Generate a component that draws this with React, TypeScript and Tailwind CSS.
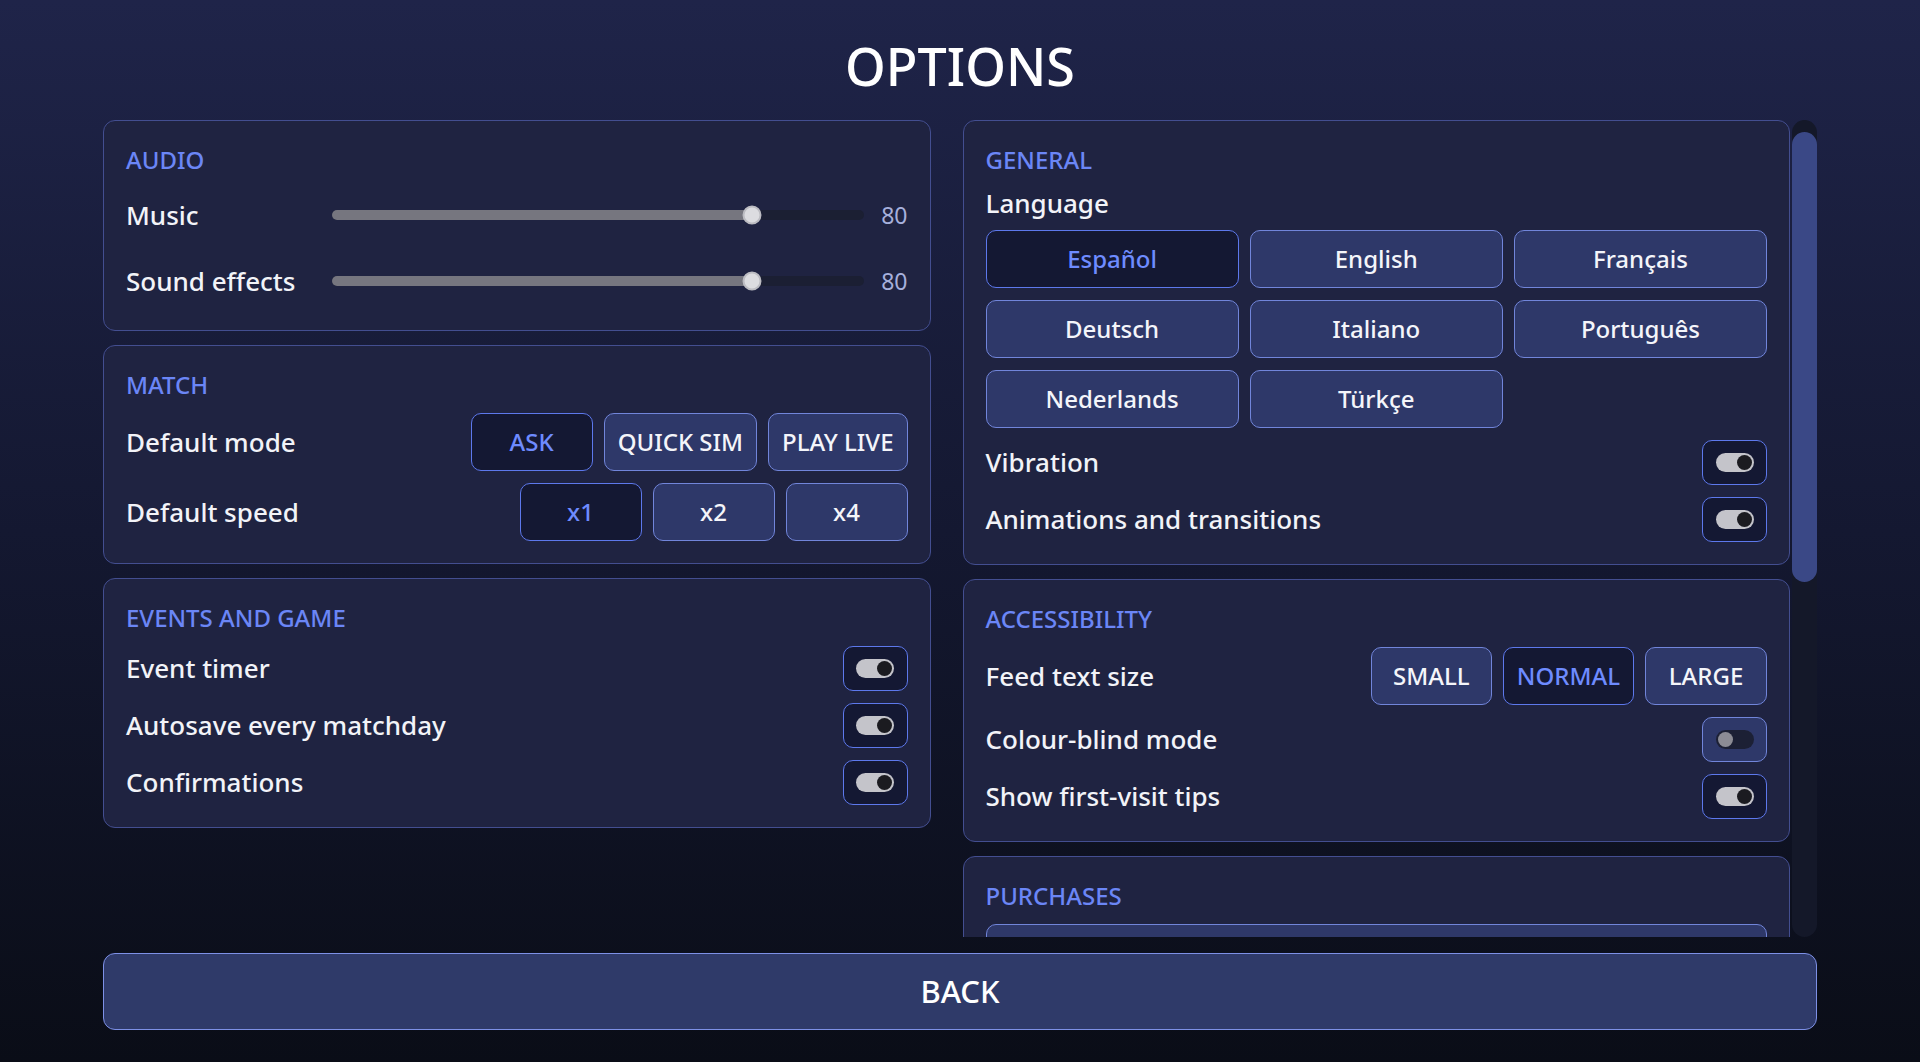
import React from "react";

const FONT = { fontFamily: '"Noto Sans", "Open Sans", sans-serif' };

function Panel({ title, children }: { title: string; children?: React.ReactNode }) {
  return (
    <div className="rounded-[12px] border border-[#434e90] bg-[#1f2341] p-[22px] flex flex-col gap-[12px] shrink-0">
      <div className="text-[24px] leading-[33px] font-medium text-[#6b86f6] uppercase">{title}</div>
      {children}
    </div>
  );
}

function Btn({ label, selected, className = "" }: { label: string; selected?: boolean; className?: string }) {
  return (
    <div
      className={
        "h-[58px] rounded-[10px] border flex items-center justify-center px-[13px] text-[24px] font-medium " +
        (selected
          ? "bg-[#141833] border-[#5d78ec] text-[#6e8bff] "
          : "bg-[#2e3869] border-[#7185da] text-[#f4f5fa] ") +
        className
      }
    >
      {label}
    </div>
  );
}

function Toggle({ on }: { on: boolean }) {
  return (
    <div
      className={
        "w-[65px] h-[45px] rounded-[10px] border flex items-center justify-center " +
        (on ? "bg-[#141833] border-[#5d78ec]" : "bg-[#2e3869] border-[#7185da]")
      }
    >
      {on ? (
        <div className="w-[38px] h-[19px] rounded-full bg-[#c4c4ca] flex items-center justify-end px-[2px]">
          <div className="w-[15px] h-[15px] rounded-full bg-[#1b1b20]" />
        </div>
      ) : (
        <div className="w-[38px] h-[19px] rounded-full bg-[#1c2035] flex items-center justify-start px-[2px]">
          <div className="w-[15px] h-[15px] rounded-full bg-[#8c8c95]" />
        </div>
      )}
    </div>
  );
}

function Label({ children }: { children: React.ReactNode }) {
  return <div className="text-[26px] leading-[33px] font-medium text-[#f2f3f8]">{children}</div>;
}

function ToggleRow({ label, on }: { label: string; on: boolean }) {
  return (
    <div className="flex items-center justify-between">
      <Label>{label}</Label>
      <Toggle on={on} />
    </div>
  );
}

function SliderRow({ label, value }: { label: string; value: number }) {
  return (
    <div className="h-[54px] flex items-center gap-[16px]">
      <div className="w-[190px]">
        <Label>{label}</Label>
      </div>
      <div className="flex-1 relative h-[10px] rounded-full bg-[#1b1f33]">
        <div className="h-full rounded-full bg-[#76767f]" style={{ width: `${value - 1}%` }} />
        <div
          className="absolute top-1/2 -translate-y-1/2 -translate-x-1/2 w-[19px] h-[19px] rounded-full bg-[#dcdce0] border-[2px] border-[#bcbcc2]"
          style={{ left: `${value - 1}%` }}
        />
      </div>
      <div className="w-[28px] text-right text-[23px] leading-[33px] text-[#a6b0dc]">{value}</div>
    </div>
  );
}

export default function App() {
  return (
    <div
      style={FONT}
      className="w-full h-[1062px] bg-gradient-to-b from-[#1f2449] via-[#141831] to-[#0a0d17] flex flex-col px-[103px] pt-[39px] pb-[32px] text-white overflow-hidden"
    >
      <h1 className="text-[52px] leading-[54px] font-medium text-center text-white mb-[27px]">OPTIONS</h1>

      <div className="flex-1 min-h-0 flex gap-[2px]">
        <div className="flex-1 min-w-0 overflow-hidden">
          <div className="grid grid-cols-2 gap-[32px] items-start">
            {/* Left column */}
            <div className="flex flex-col gap-[14px]">
              <Panel title="Audio">
                <SliderRow label="Music" value={80} />
                <SliderRow label="Sound effects" value={80} />
              </Panel>
              <Panel title="Match">
                <div className="flex items-center justify-between">
                  <Label>Default mode</Label>
                  <div className="flex gap-[11px]">
                    <Btn label="ASK" selected className="w-[122px]" />
                    <Btn label="QUICK SIM" />
                    <Btn label="PLAY LIVE" />
                  </div>
                </div>
                <div className="flex items-center justify-between">
                  <Label>Default speed</Label>
                  <div className="flex gap-[11px]">
                    <Btn label="x1" selected className="w-[122px]" />
                    <Btn label="x2" className="w-[122px]" />
                    <Btn label="x4" className="w-[122px]" />
                  </div>
                </div>
              </Panel>
              <Panel title="Events and game">
                <ToggleRow label="Event timer" on />
                <ToggleRow label="Autosave every matchday" on />
                <ToggleRow label="Confirmations" on />
              </Panel>
            </div>

            {/* Right column */}
            <div className="flex flex-col gap-[14px]">
              <Panel title="General">
                <div className="text-[26px] leading-[30px] font-medium text-[#f2f3f8]">Language</div>
                <div className="grid grid-cols-3 gap-x-[11px] gap-y-[12px]">
                  <Btn label="Español" selected />
                  <Btn label="English" />
                  <Btn label="Français" />
                  <Btn label="Deutsch" />
                  <Btn label="Italiano" />
                  <Btn label="Português" />
                  <Btn label="Nederlands" />
                  <Btn label="Türkçe" />
                </div>
                <ToggleRow label="Vibration" on />
                <ToggleRow label="Animations and transitions" on />
              </Panel>
              <Panel title="Accessibility">
                <div className="flex items-center justify-between">
                  <Label>Feed text size</Label>
                  <div className="flex gap-[11px]">
                    <Btn label="SMALL" className="w-[121px]" />
                    <Btn label="NORMAL" selected />
                    <Btn label="LARGE" className="w-[122px]" />
                  </div>
                </div>
                <ToggleRow label="Colour-blind mode" on={false} />
                <ToggleRow label="Show first-visit tips" on />
              </Panel>
              <Panel title="Purchases">
                <div className="h-[58px] rounded-[10px] border bg-[#2e3869] border-[#7185da]" />
              </Panel>
            </div>
          </div>
        </div>

        {/* Scrollbar */}
        <div className="w-[25px] rounded-full bg-[#141829] pt-[12px]">
          <div className="h-[450px] rounded-full bg-[#3a4886]" />
        </div>
      </div>

      <div className="mt-[16px] h-[77px] shrink-0 rounded-[12px] border border-[#7d90e6] bg-[#2f3a69] flex items-center justify-center text-[31px] font-medium text-white">
        BACK
      </div>
    </div>
  );
}
